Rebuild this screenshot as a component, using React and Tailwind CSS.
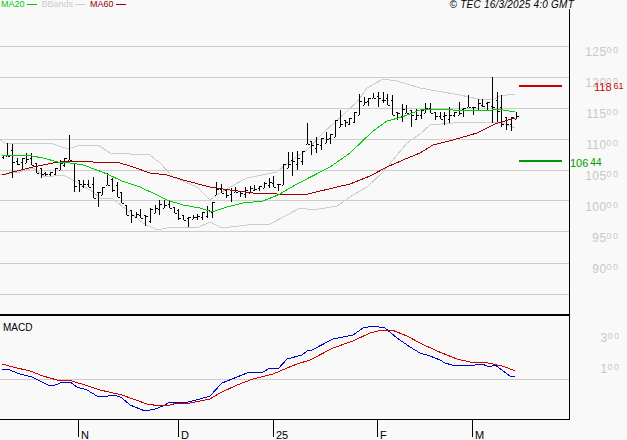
const bars = [
  [155, 159], [143, 156], [144, 178], [158, 165], [158, 170], [153, 163], [153, 165], [163, 173], [168, 178], [172, 176],
  [172, 176], [168, 175], [160, 170], [158, 167], [135, 160], [163, 192], [180, 192], [180, 188], [180, 187], [177, 198],
  [192, 207], [187, 195], [173, 185], [178, 192], [182, 197], [192, 203], [205, 215], [210, 223], [212, 218], [209, 218],
  [215, 226], [208, 223], [205, 213], [200, 215], [200, 208], [201, 208], [207, 213], [209, 220], [215, 220], [217, 227],
  [215, 219], [214, 220], [212, 220], [206, 218], [202, 218], [182, 195], [184, 193], [190, 198], [188, 202], [187, 192],
  [191, 197], [187, 198], [186, 193], [185, 191], [186, 191], [182, 188], [178, 188], [176, 187], [184, 191], [164, 185],
  [152, 168], [152, 176], [151, 170], [151, 165], [123, 144], [141, 155], [137, 153], [138, 150], [132, 143], [134, 144],
  [120, 137], [110, 127], [120, 127], [118, 125], [112, 123], [94, 115], [97, 105], [98, 106], [93, 98], [92, 107],
  [92, 103], [94, 105], [95, 115], [112, 120], [104, 122], [105, 113], [110, 127], [109, 120], [110, 119], [103, 113],
  [103, 113], [112, 120], [112, 119], [112, 125], [107, 123], [112, 117], [102, 115], [108, 117], [95, 107], [107, 115],
  [99, 110], [99, 107], [102, 110], [77, 123], [92, 122], [95, 127], [117, 130], [117, 131], [112, 119],
];

const ma20 = "2,155 10,155 32,156 43,158 58,162 70,163 83,165 97,170 107,174 122,181 140,187 157,195 167,200 183,205 200,208 212,212 227,207 243,203 263,201 278,195 297,184 330,167 350,153 373,131 387,121 402,117 420,110 430,109 443,109 453,110 470,110 492,110 497,109 515,112";
const ma60 = "2,175 13,172 33,167 53,163 70,161 93,162 117,162 133,167 150,173 167,175 183,180 210,187 230,190 253,193 277,194 308,194 337,187 350,184 370,176 387,167 403,160 420,153 433,145 453,140 477,133 495,124 515,118";
const bbUp = "0,140 5,143 50,143 68,149 77,146 98,145 110,153 150,155 160,163 173,177 197,187 210,200 217,195 230,187 247,178 277,172 285,165 307,150 323,133 357,102 367,88 383,79 397,81 420,88 437,91 460,95 478,99 492,100 500,96 515,94";
const bbLow = "0,175 20,172 33,168 45,177 63,175 77,182 93,192 100,198 113,199 127,210 143,223 157,230 167,228 180,227 197,228 210,222 222,228 247,225 270,224 287,215 300,208 313,210 337,206 353,195 367,187 383,172 397,155 407,143 420,134 430,125 453,123 487,122 500,122 515,128";
const macdBlue = "2,370 7,369 20,374 32,377 40,381 50,386 55,385 63,382 70,382 77,387 87,390 97,396 108,396 115,395 122,398 130,405 140,409 145,411 155,409 163,406 170,402 188,402 200,399 210,396 222,383 237,377 247,373 263,372 270,368 278,369 287,359 302,355 307,351 312,350 333,339 353,335 363,328 373,326 385,328 397,338 410,347 420,353 430,356 440,360 445,363 452,365 475,365 482,364 487,366 492,366 495,365 498,367 507,374 510,376 515,376";
const macdRed = "2,364 13,367 30,371 43,376 57,380 72,381 88,386 100,390 122,395 133,399 147,404 160,406 170,405 177,403 190,403 210,399 220,393 237,385 253,379 273,374 287,368 297,364 310,360 333,348 353,341 370,333 382,330 392,330 407,336 420,343 437,351 457,359 470,362 488,363 502,366 508,368 515,371";

const gridLines = [46, 77, 108, 139, 170, 200, 231, 263, 294];
const priceLabels = ["125", "120", "115", "110", "105", "100", "95", "90"];

const clamp = (v, a, b) => Math.min(b, Math.max(a, v));
const mid = (b) => (b[0] + b[1]) / 2;

// open tick on the left, close tick on the right
const barsPath = bars
  .map((b, i) => {
    const x = Math.round(2.67 + i * 4.75);
    const open = Math.round(clamp(mid(bars[i - 1] || b), b[0], b[1]));
    const close = Math.round(clamp(mid(bars[i + 1] || b), b[0], b[1]));
    return `M${x + 0.5} ${b[0]}V${b[1]}M${x - 1} ${open + 0.5}H${x}M${x + 1} ${close + 0.5}H${x + 3}`;
  })
  .join("");

function Legend({ label, text, line }) {
  return (
    <div className={`flex items-center gap-[2px] ${text}`}>
      <span>{label}</span>
      <span className={`w-[10px] h-px ${line}`} />
    </div>
  );
}

function AxisLabel({ big, small = "00", className = "" }) {
  return (
    <div className={`flex justify-end items-start leading-none text-[#c8c8c8] ${className}`}>
      <span className="text-[12px] leading-none tracking-[.4px]">{big}</span>
      <span className="text-[9px] leading-none tracking-[1.5px] -mr-[1.5px]">{small}</span>
    </div>
  );
}

function Tick({ label, className }) {
  return (
    <div className={`flex items-start shrink-0 ${className}`}>
      <span className="w-px h-[17px] bg-black" />
      <span className="ml-[2px] mt-[10px] text-[11px] leading-none text-black">{label}</span>
    </div>
  );
}

export default function App() {
  return (
    <div className="w-[627px] h-[440px] overflow-hidden bg-[#f9f9f9] font-['Liberation_Sans',Arial,sans-serif]">
      {/* Legend and source */}
      <div className="h-[9px] w-[574px] flex items-center text-[9px] leading-none">
        <div className="flex pl-px gap-[5px]">
          <Legend label="MA20" text="text-[#00cc00]" line="bg-[#00cc00]" />
          <Legend label="BBands" text="text-[#cccccc]" line="bg-[#cccccc]" />
          <Legend label="MA60" text="text-[#990000]" line="bg-[#990000]" />
        </div>
        <span className="ml-auto italic text-[10px] tracking-[.23px] text-black">© TEC 16/3/2025 4:0 GMT</span>
      </div>

      {/* Price panel */}
      <div className="flex h-[307px]">
        <div className="w-[570px] shrink-0 border-r border-b-2 border-black">
          <svg width="569" height="305" viewBox="0 9 569 305" className="block">
            <g shapeRendering="crispEdges" fill="none">
              {gridLines.map((y) => (
                <line key={y} x1="0" x2="569" y1={y + 0.5} y2={y + 0.5} stroke="#cccccc" />
              ))}
              <polyline points={bbUp} stroke="#cccccc" />
              <polyline points={bbLow} stroke="#cccccc" />
              <path d={barsPath} stroke="#000000" />
              <polyline points={ma60} stroke="#990000" />
              <polyline points={ma20} stroke="#00cc00" />
              <rect x="519" y="85" width="43" height="2" fill="#cc0000" />
              <rect x="519" y="160" width="43" height="2" fill="#009900" />
            </g>
          </svg>
        </div>
        <div className="relative flex-1 pr-[9px] pt-[37px]">
          {priceLabels.map((p) => (
            <AxisLabel key={p} big={p} className="h-[31px]" />
          ))}
          <div className="absolute left-[24px] top-[73px] flex items-start leading-none text-[#cc0000]">
            <span className="text-[11px] leading-none">118</span>
            <span className="ml-[2px] text-[9px] leading-none">61</span>
          </div>
          <div className="absolute left-0 top-[149px] flex items-start leading-none text-[#009900]">
            <span className="text-[11px] leading-none">106</span>
            <span className="ml-[2px] text-[10px] leading-none">44</span>
          </div>
        </div>
      </div>

      {/* MACD panel */}
      <div className="flex h-[104px]">
        <div className="relative w-[570px] shrink-0 border-r border-b border-black">
          <span className="absolute left-[3px] top-[7px] text-[10px] leading-none text-black">MACD</span>
          <svg width="569" height="103" viewBox="0 316 569 103" className="block">
            <g shapeRendering="crispEdges" fill="none">
              <line x1="0" x2="569" y1="379.5" y2="379.5" stroke="#cccccc" />
              <polyline points={macdBlue} stroke="#0000cc" />
              <polyline points={macdRed} stroke="#cc0000" />
            </g>
          </svg>
        </div>
        <div className="flex-1 pr-[8px] pt-[16px]">
          <AxisLabel big="3" className="h-[31px]" />
          <AxisLabel big="1" />
        </div>
      </div>

      {/* Month ticks */}
      <div className="flex h-[20px] pl-[78px]">
        <Tick label="N" className="w-[100px]" />
        <Tick label="D" className="w-[95px]" />
        <Tick label="25" className="w-[104px]" />
        <Tick label="F" className="w-[95px]" />
        <Tick label="M" className="w-[50px]" />
      </div>
    </div>
  );
}
